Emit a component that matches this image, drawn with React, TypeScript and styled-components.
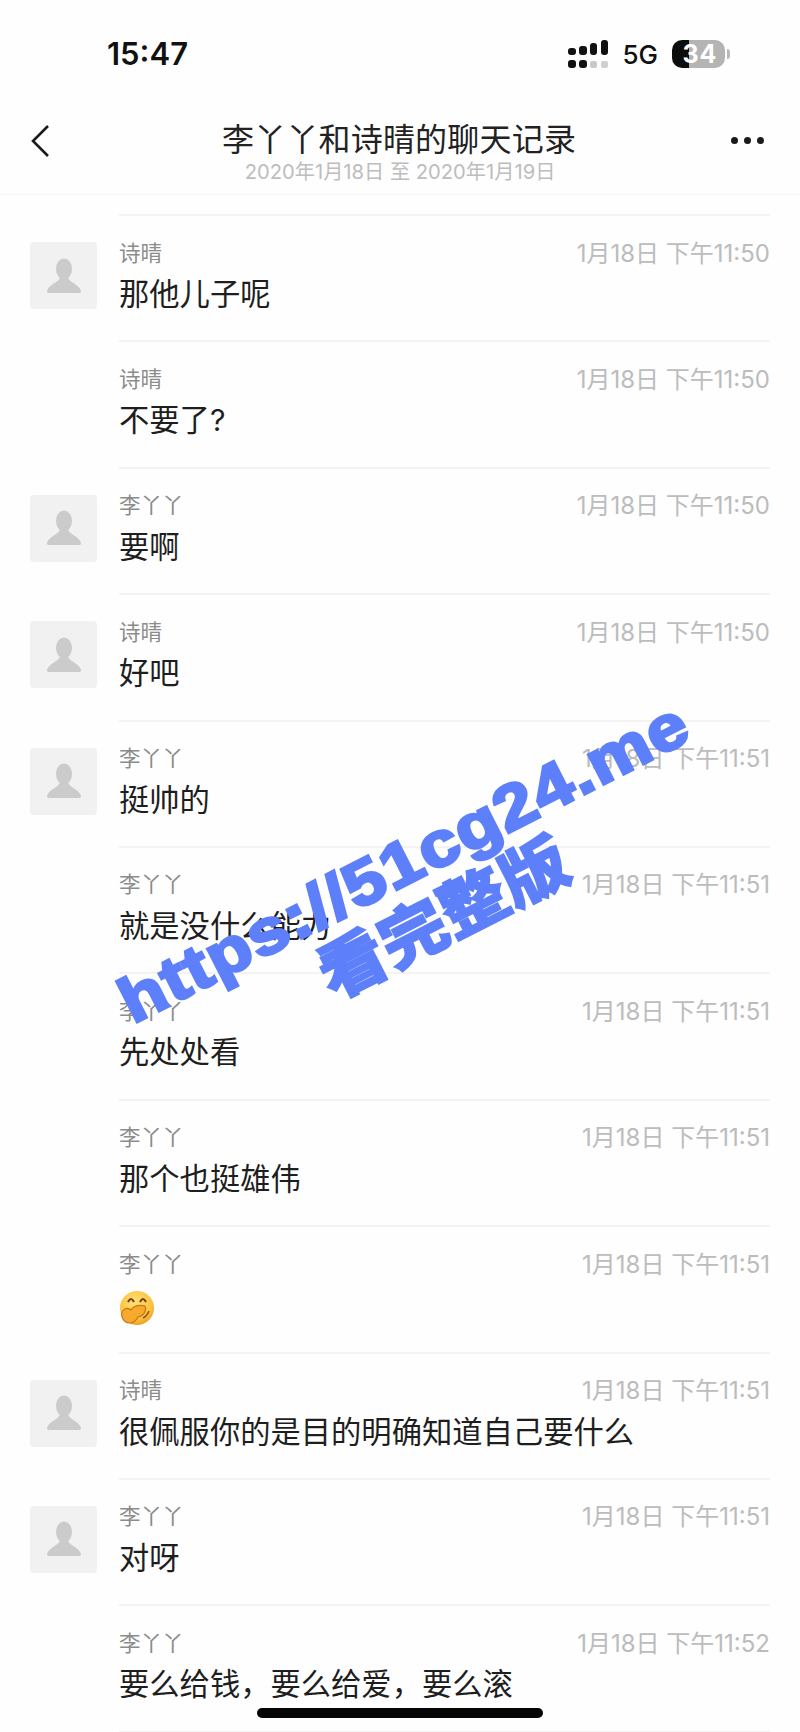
import React from "react";
import styled, { createGlobalStyle } from "styled-components";

const Global = createGlobalStyle`
  html, body { margin: 0; padding: 0; background: #fff; }
  * { box-sizing: border-box; }
`;

const CJK = `"Inter", "Noto Sans CJK SC", sans-serif`;

const Page = styled.div`
  position: relative;
  width: 800px;
  height: 1732px;
  overflow: hidden;
  background: #fefefe;
  font-family: ${CJK};
`;

const StatusBar = styled.div`
  height: 108px;
  padding: 32px 0 0 107px;
  display: flex;
  justify-content: space-between;
  align-items: flex-start;
`;

const Clock = styled.div`
  font-size: 31px;
  line-height: 44px;
  font-weight: 600;
  color: #111;
`;

const StatusIcons = styled.div`
  display: flex;
  align-items: center;
  gap: 14px;
  height: 44px;
  padding-right: 75px;
`;

const Network = styled.span`
  font-size: 26px;
  font-weight: 500;
  color: #111;
  font-family: "Inter", sans-serif;
`;

const Battery = styled.div`
  position: relative;
  width: 53px;
  height: 28px;
  border-radius: 10px;
  background: linear-gradient(90deg, #0c0c0c 0 33%, #b4b4b4 33% 100%);
  color: #fff;
  font-size: 25px;
  font-weight: 700;
  line-height: 28px;
  text-align: center;
  letter-spacing: 1px;
  padding-left: 3px;
  font-family: "Inter", sans-serif;
  &::after {
    content: "";
    position: absolute;
    right: -5px;
    top: 9px;
    width: 3px;
    height: 10px;
    border-radius: 0 3px 3px 0;
    background: #b9b9b9;
  }
`;

const Header = styled.header`
  height: 87px;
  border-bottom: 1px solid #f6f6f6;
  display: grid;
  grid-template-columns: 96px 1fr 96px;
  align-items: start;
  background: #fefefe;
`;

const BackButton = styled.div`
  padding: 16px 0 0 30px;
  display: flex;
`;

const Titles = styled.div`
  display: flex;
  flex-direction: column;
  align-items: center;
`;

const Title = styled.div`
  font-size: 32px;
  letter-spacing: 0.2px;
  line-height: 46px;
  margin-top: 9px;
  margin-right: 2px;
  color: #222;
  white-space: nowrap;
`;

const Subtitle = styled.div`
  font-size: 20.2px;
  line-height: 24px;
  margin-top: -3px;
  color: #bdbdbd;
  white-space: nowrap;
`;

const MoreDots = styled.div`
  display: flex;
  gap: 6px;
  padding: 29px 0 0 27px;
`;

const Dot = styled.span`
  width: 7px;
  height: 7px;
  border-radius: 50%;
  background: #1a1a1a;
`;

const List = styled.main`
  padding-top: 19px;
`;

const Row = styled.section`
  height: 126.4px;
  padding-left: 30px;
  display: grid;
  grid-template-columns: 67px 1fr;
  column-gap: 22px;
`;

const Avatar = styled.div`
  width: 67px;
  height: 67px;
  margin-top: 28px;
  border-radius: 4px;
  background: #f1f1f1;
  display: flex;
  align-items: center;
  justify-content: center;
`;

const Body = styled.div`
  width: 651px;
  border-top: 2px solid #f3f3f3;
  padding-top: 21px;
`;

const Meta = styled.div`
  display: flex;
  justify-content: space-between;
  align-items: center;
  height: 28px;
`;

const Name = styled.span`
  font-size: 21.5px;
  color: #8c8c8c;
`;

const Time = styled.span`
  font-size: 24px;
  color: #bcbcbc;
  white-space: nowrap;
`;

const Message = styled.div`
  margin-top: 9px;
  font-size: 30.3px;
  line-height: 40px;
  color: #1e1e1e;
  white-space: nowrap;
  display: flex;
  align-items: center;
`;

const HomeIndicator = styled.div`
  position: absolute;
  left: 257px;
  top: 1708px;
  width: 286px;
  height: 10px;
  border-radius: 5px;
  background: #050505;
`;

const Watermark = styled.div<{ $x: number; $y: number; $size: number; $spacing: number; $stroke: number; $stretch: number }>`
  position: absolute;
  left: ${(p) => p.$x}px;
  top: ${(p) => p.$y}px;
  transform: translate(-50%, -50%) rotate(-27deg) scaleX(${(p) => p.$stretch});
  font-size: ${(p) => p.$size}px;
  letter-spacing: ${(p) => p.$spacing}px;
  line-height: 1;
  font-weight: 900;
  color: #5d80fa;
  -webkit-text-stroke: ${(p) => p.$stroke}px #5d80fa;
  white-space: nowrap;
  font-family: "Liberation Sans", "Noto Sans CJK SC", sans-serif;
`;

const EmojiIcon = styled.svg`
  margin-top: 5px;
`;

const Person = () => (
  <svg width="36" height="36" viewBox="0 0 36 36" aria-hidden="true">
    <ellipse cx="18" cy="11" rx="8" ry="10.5" fill="#cbcbcb" />
    <path d="M14 19 C14 24 3 26 1 33 C1 35 2 35 3 35 H33 C34 35 35 35 35 33 C33 26 22 24 22 19 Z" fill="#cbcbcb" />
  </svg>
);

const BackIcon = () => (
  <svg width="20" height="34" viewBox="0 0 20 34" aria-hidden="true">
    <path d="M18 2 L3 17 L18 32" fill="none" stroke="#1a1a1a" strokeWidth="2.6" />
  </svg>
);

const Signal = () => (
  <svg width="40" height="28" viewBox="0 0 40 28" fill="#111" aria-hidden="true">
    <rect x="0" y="8" width="8" height="7" rx="3" />
    <rect x="11" y="6" width="8" height="9" rx="3" />
    <rect x="22" y="3" width="7" height="12" rx="3" />
    <rect x="33" y="0" width="7" height="15" rx="3" />
    <rect x="0" y="20" width="8" height="8" rx="3" />
    <rect x="11" y="20" width="8" height="8" rx="3" />
    <rect x="22" y="21" width="7" height="7" rx="2" fill="#c9c9c9" />
    <rect x="33" y="21" width="7" height="7" rx="2" fill="#cfcfcf" />
  </svg>
);

const ThinkEmoji = () => (
  <EmojiIcon width="36" height="36" viewBox="0 0 36 36" aria-hidden="true">
    <defs>
      <radialGradient id="face" cx="45%" cy="35%" r="70%">
        <stop offset="0%" stopColor="#ffe27a" />
        <stop offset="70%" stopColor="#fcc23c" />
        <stop offset="100%" stopColor="#e8951d" />
      </radialGradient>
    </defs>
    <circle cx="18" cy="18" r="17" fill="url(#face)" />
    <path d="M9 12 Q12 6 15 12 M21 12 Q24 6 27 12" fill="none" stroke="#6b3b10" strokeWidth="2" />
    <path d="M3 27 C1 20 8 16 12 20 C15 15 21 15 26 16 C28 20 25 26 19 27 C15 35 6 35 3 27 Z" fill="#f6a92c" stroke="#c9761a" strokeWidth="1.2" />
    <path d="M30 21 Q28 26 24 28" fill="none" stroke="#8a4e14" strokeWidth="1.5" />
  </EmojiIcon>
);

type Item = { name: string; time: string; text?: string; avatar?: boolean; emoji?: boolean };

const LI = "李丫丫";
const SQ = "诗晴";
const items: Item[] = [
  { name: SQ, time: "11:50", text: "那他儿子呢", avatar: true },
  { name: SQ, time: "11:50", text: "不要了?" },
  { name: LI, time: "11:50", text: "要啊", avatar: true },
  { name: SQ, time: "11:50", text: "好吧", avatar: true },
  { name: LI, time: "11:51", text: "挺帅的", avatar: true },
  { name: LI, time: "11:51", text: "就是没什么能力" },
  { name: LI, time: "11:51", text: "先处处看" },
  { name: LI, time: "11:51", text: "那个也挺雄伟" },
  { name: LI, time: "11:51", emoji: true },
  { name: SQ, time: "11:51", text: "很佩服你的是目的明确知道自己要什么", avatar: true },
  { name: LI, time: "11:51", text: "对呀", avatar: true },
  { name: LI, time: "11:52", text: "要么给钱，要么给爱，要么滚" },
];

export default function App() {
  return (
    <Page>
      <Global />
      <StatusBar>
        <Clock>15:47</Clock>
        <StatusIcons>
          <Signal />
          <Network>5G</Network>
          <Battery>34</Battery>
        </StatusIcons>
      </StatusBar>
      <Header>
        <BackButton>
          <BackIcon />
        </BackButton>
        <Titles>
          <Title>李丫丫和诗晴的聊天记录</Title>
          <Subtitle>2020年1月18日 至 2020年1月19日</Subtitle>
        </Titles>
        <MoreDots>
          <Dot />
          <Dot />
          <Dot />
        </MoreDots>
      </Header>
      <List>
        {items.map((it, i) => (
          <Row key={i}>
            {it.avatar ? (
              <Avatar>
                <Person />
              </Avatar>
            ) : (
              <span />
            )}
            <Body>
              <Meta>
                <Name>{it.name}</Name>
                <Time>1月18日 下午{it.time}</Time>
              </Meta>
              <Message>{it.emoji ? <ThinkEmoji /> : it.text}</Message>
            </Body>
          </Row>
        ))}
        <Row>
          <span />
          <Body />
        </Row>
      </List>
      <Watermark $x={404} $y={862} $size={63} $spacing={1.2} $stroke={3} $stretch={1.14}>https://51cg24.me</Watermark>
      <Watermark $x={444} $y={919} $size={64} $spacing={0} $stroke={1.5} $stretch={1.06}>看完整版</Watermark>
      <HomeIndicator />
    </Page>
  );
}
